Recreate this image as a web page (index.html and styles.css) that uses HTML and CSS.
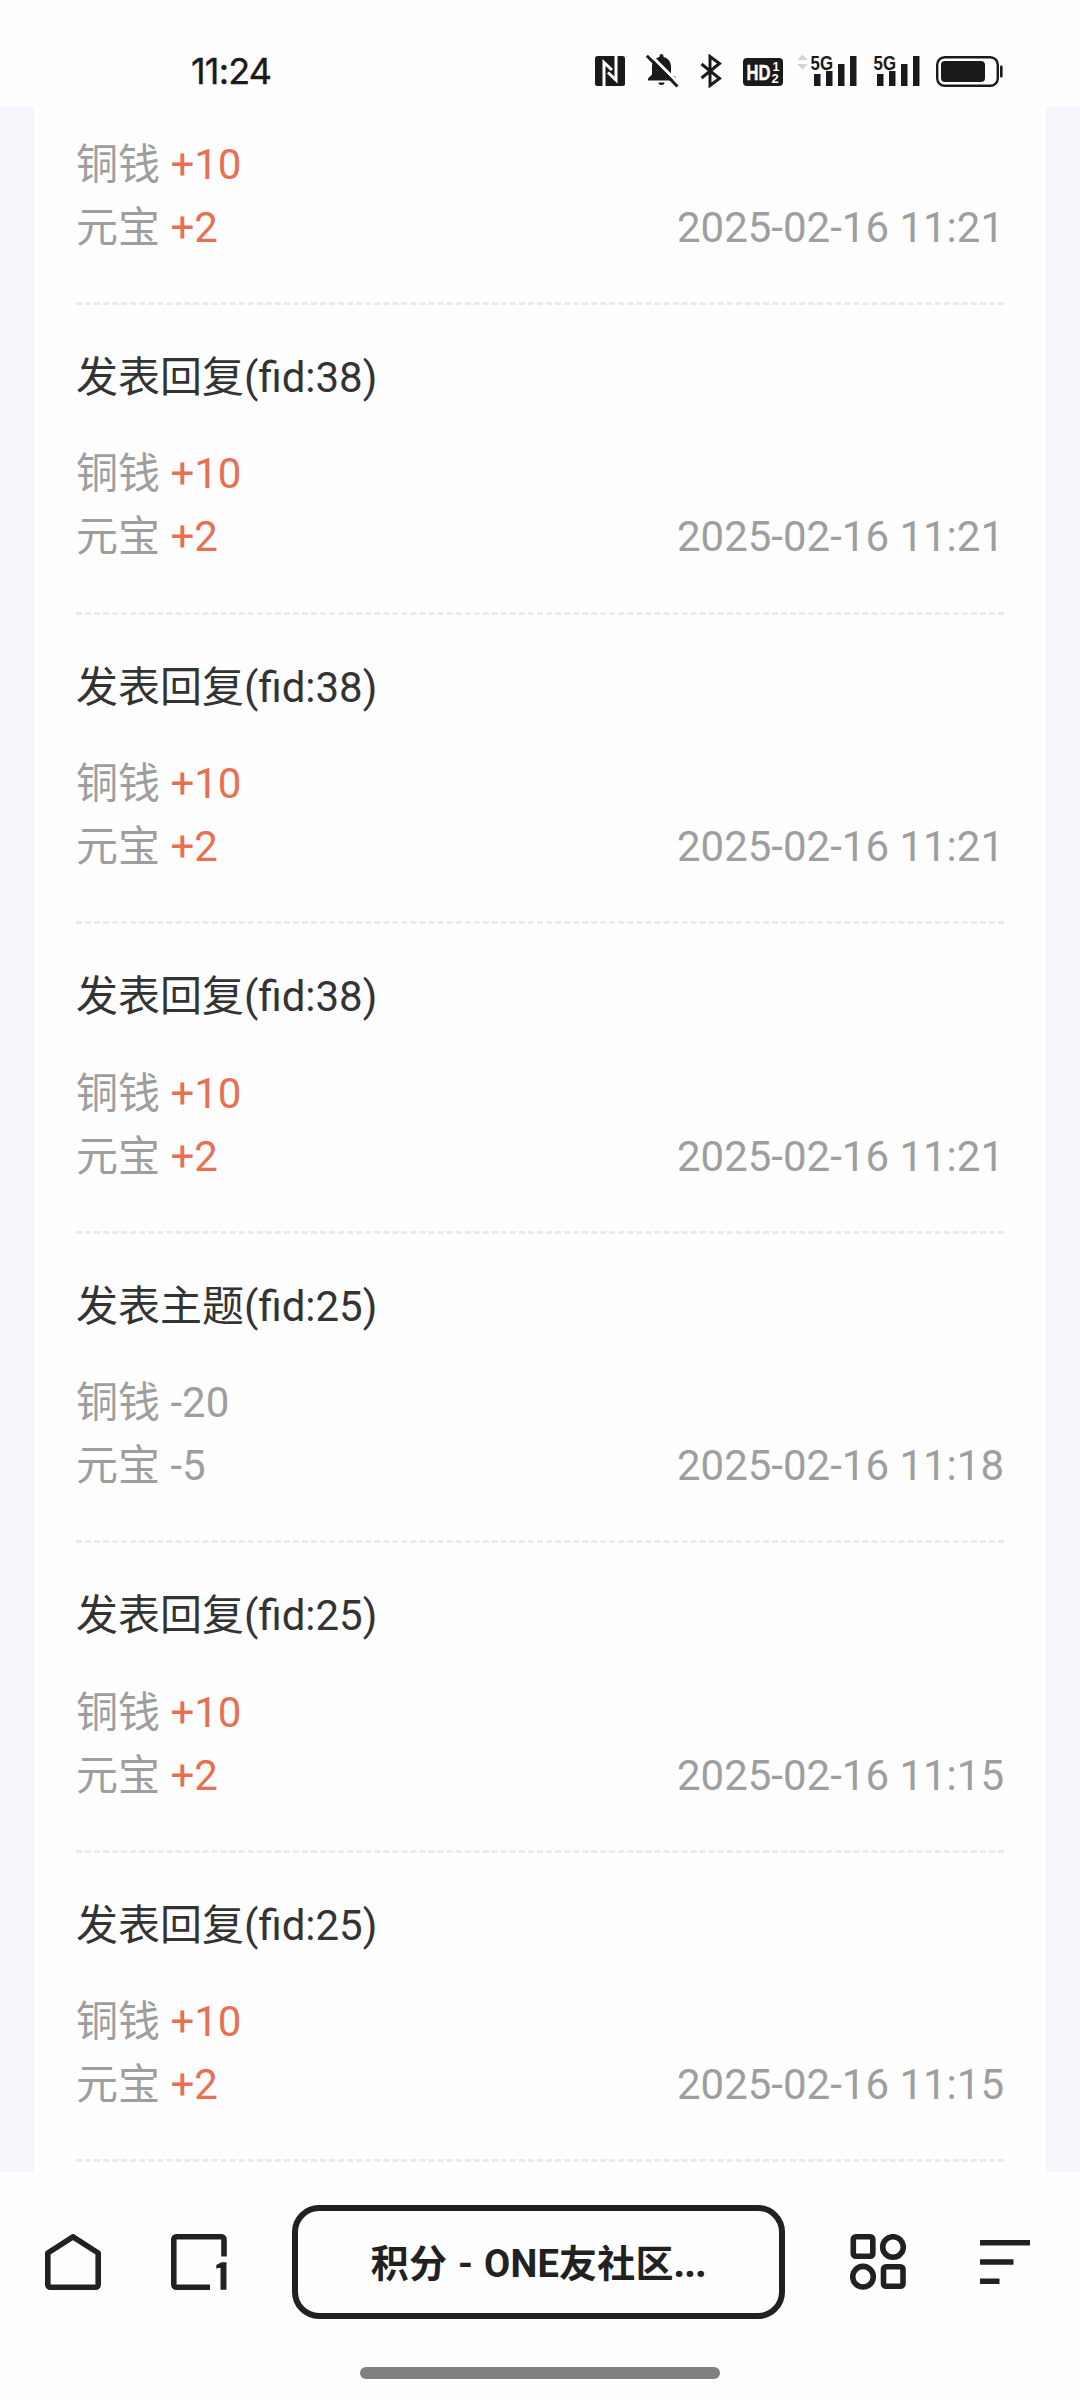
FILE: index.html
```html
<!DOCTYPE html>
<html lang="zh-CN">
<head>
<meta charset="utf-8">
<title>积分 - ONE友社区</title>
<link rel="stylesheet" href="styles.css">
</head>
<body>
<div class="screen">
  <header class="status">
    <span class="clock">11:24</span>
    <div class="status-icons">
      <svg class="nfc" width="30" height="30" viewBox="0 0 30 30">
        <rect width="30" height="30" rx="2.500" fill="#1a1a1a"/>
        <path d="M9 30V6.500L17 14M21 0V24L13 16.500" fill="none" stroke="#fff" stroke-width="3"/>
      </svg>
      <svg class="bell" width="34" height="34" viewBox="0 0 34 34">
        <path d="M2 26.500V24.500L6 20.500V13C6 7.500 9 4 13.500 3V2a2 2 0 0 1 4 0v1C22 4 25 7.500 25 13v7.500l4.500 2.500v3.500ZM12.500 28.500h6a3 2.500 0 0 1-6 0Z" fill="#1a1a1a"/>
        <path d="M3.500 0L34 30.500" stroke="#fff" stroke-width="3"/>
        <path d="M.8 1.800L31.500 32.500" stroke="#1a1a1a" stroke-width="3"/>
      </svg>
      <svg class="bluetooth" width="23" height="34" viewBox="0 0 23 34">
        <path d="M1.500 10L19.500 24.500L10 31.500V2.500L19.500 9.500L1.500 24" fill="none" stroke="#1a1a1a" stroke-width="3"/>
      </svg>
      <svg class="hd" width="40" height="28" viewBox="0 0 40 28">
        <rect width="40" height="28" rx="4" fill="#1a1a1a"/>
        <g class="hd-text">
          <text x="3.500" y="22" font-size="22" textLength="24" lengthAdjust="spacingAndGlyphs" stroke="#fff" stroke-width=".4">HD</text>
          <text x="29.500" y="12.800" font-size="12.500">1</text>
          <text x="28.500" y="24.500" font-size="13">2</text>
        </g>
      </svg>
      <svg class="signal-a" width="60" height="40" viewBox="0 -6 60 40">
        <path d="M0 6L5.500 .5L11 6ZM0 10H11L5.500 15.500Z" fill="#d6d6d6"/>
        <text class="gen" x="13.500" y="15.500" textLength="22.500" lengthAdjust="spacingAndGlyphs">5G</text>
        <path d="M17 20h6.500v12h-6.500zM29 17h6.500v15h-6.500zM41 10h6.500v22h-6.500zM53 2h6.500v30h-6.500z" fill="#1a1a1a"/>
      </svg>
      <svg class="signal-b" width="47" height="40" viewBox="13 -6 47 40">
        <text class="gen" x="13.500" y="15.500" textLength="22.500" lengthAdjust="spacingAndGlyphs">5G</text>
        <path d="M17 20h6.500v12h-6.500zM29 17h6.500v15h-6.500zM41 10h6.500v22h-6.500zM53 2h6.500v30h-6.500z" fill="#1a1a1a"/>
      </svg>
      <svg class="battery" width="67" height="31" viewBox="0 0 67 31">
        <rect x="1.200" y="1.200" width="60.600" height="28.600" rx="7.500" fill="none" stroke="#1a1a1a" stroke-width="2.400"/>
        <rect x="5" y="5" width="44" height="21" rx="4" fill="#1a1a1a"/>
        <rect x="64" y="9.500" width="2.600" height="12" rx="1.200" fill="#1a1a1a"/>
      </svg>
    </div>
  </header>

  <main class="page">
    <ul class="log">
      <li class="entry">
        <div class="detail">
          <div><p>铜钱 <span class="gain">+10</span></p><p>元宝 <span class="gain">+2</span></p></div>
          <time>2025-02-16 11:21</time>
        </div>
      </li>
      <li class="entry">
        <h2>发表回复(fid:38)</h2>
        <div class="detail">
          <div><p>铜钱 <span class="gain">+10</span></p><p>元宝 <span class="gain">+2</span></p></div>
          <time>2025-02-16 11:21</time>
        </div>
      </li>
      <li class="entry">
        <h2>发表回复(fid:38)</h2>
        <div class="detail">
          <div><p>铜钱 <span class="gain">+10</span></p><p>元宝 <span class="gain">+2</span></p></div>
          <time>2025-02-16 11:21</time>
        </div>
      </li>
      <li class="entry">
        <h2>发表回复(fid:38)</h2>
        <div class="detail">
          <div><p>铜钱 <span class="gain">+10</span></p><p>元宝 <span class="gain">+2</span></p></div>
          <time>2025-02-16 11:21</time>
        </div>
      </li>
      <li class="entry">
        <h2>发表主题(fid:25)</h2>
        <div class="detail">
          <div><p>铜钱 -20</p><p>元宝 -5</p></div>
          <time>2025-02-16 11:18</time>
        </div>
      </li>
      <li class="entry">
        <h2>发表回复(fid:25)</h2>
        <div class="detail">
          <div><p>铜钱 <span class="gain">+10</span></p><p>元宝 <span class="gain">+2</span></p></div>
          <time>2025-02-16 11:15</time>
        </div>
      </li>
      <li class="entry">
        <h2>发表回复(fid:25)</h2>
        <div class="detail">
          <div><p>铜钱 <span class="gain">+10</span></p><p>元宝 <span class="gain">+2</span></p></div>
          <time>2025-02-16 11:15</time>
        </div>
      </li>
    </ul>
  </main>

  <footer class="browser">
    <nav class="toolbar">
      <svg class="icon" width="56" height="56" viewBox="0 0 56 56">
        <path d="M2.800 19L28 2.800L53.200 19V50.700a2.500 2.500 0 0 1-2.500 2.500H5.300a2.500 2.500 0 0 1-2.500-2.500Z"/>
      </svg>
      <svg class="icon tabs" width="56" height="56" viewBox="0 0 56 56">
        <path d="M53 22.500V5.300a2.500 2.500 0 0 0-2.500-2.500H5.300a2.500 2.500 0 0 0-2.500 2.500V50.700a2.500 2.500 0 0 0 2.500 2.500H39"/>
        <path class="count" d="M45.300 31L50.500 28.300H55.500V55.700H49.500V33.800L45.300 34.500Z"/>
      </svg>
      <div class="address">积分 - ONE友社区<span class="dots">…</span></div>
      <svg class="icon" width="56" height="56" viewBox="0 0 56 56">
        <rect x="3.300" y="2.800" width="19.500" height="19.500" rx="2.500"/>
        <circle cx="43" cy="13" r="10.300"/>
        <circle cx="13" cy="42.700" r="10.300"/>
        <rect x="33.500" y="32.800" width="19.500" height="19.500" rx="2.500"/>
      </svg>
      <svg class="icon menu" width="50" height="56" viewBox="0 0 50 56">
        <path d="M0 8.800H50M0 28H33.500M0 47.200H19.500"/>
      </svg>
    </nav>
    <div class="home-bar"></div>
  </footer>
</div>
</body>
</html>
```
FILE: styles.css
```css
* { box-sizing: border-box; }
body, h2, p, ul { margin: 0; padding: 0; }
body { background: #fff; font-family: Roboto, "Noto Sans CJK SC", sans-serif; }

.screen {
  width: 1080px;
  height: 2400px;
  display: flex;
  flex-direction: column;
  background: #fefefe;
  overflow: hidden;
}

/* status bar */
.status {
  height: 107px;
  flex: none;
  display: flex;
  justify-content: space-between;
  align-items: flex-start;
  padding: 53px 77px 0 191px;
}
.clock {
  font: 400 36px/36px Inter, sans-serif;
  color: #1a1a1a;
  letter-spacing: -0.8px;
  -webkit-text-stroke: 0.4px #1a1a1a;
}
.status-icons { display: flex; align-items: flex-start; margin-top: 1px; }
.nfc { margin: 2px 21px 0 0; }
.bell { margin-right: 20px; }
.bluetooth { margin-right: 20px; }
.hd { margin: 4px 14px 0 0; }
.signal-a,
.signal-b { margin: -6px 16px 0 0; }
.battery { margin-top: 2px; }
.hd-text { font-family: "Liberation Sans", sans-serif; font-weight: 700; fill: #fff; }
.gen { font: 700 21px "Liberation Sans", sans-serif; fill: #1a1a1a; }

/* points log */
.page {
  flex: none;
  height: 2065px;
  padding: 0 34px;
  background: #f5f6fb;
  overflow: hidden;
}
.log {
  list-style: none;
  height: 100%;
  padding: 0 42px;
  background: #fefefe;
}
.entry {
  height: 309.5px;
  padding-top: 41px;
  border-bottom: 3px dashed #ebebeb;
  font-size: 42px;
  line-height: 63px;
}
.entry:first-child { height: 198px; padding-top: 26px; }
.entry h2 {
  margin-bottom: 33.5px;
  font-size: 42px;
  font-weight: 400;
  color: #333;
}
.entry:nth-child(2) h2 { margin-bottom: 33px; }
.detail {
  display: flex;
  justify-content: space-between;
  align-items: flex-end;
  color: #9e9e9e;
}
.gain { color: #e96f53; }

/* browser controls */
.browser { flex: 1; padding-top: 33px; }
.toolbar {
  height: 114px;
  display: flex;
  align-items: center;
  gap: 65px;
  padding-left: 45px;
}
.icon { flex: none; fill: none; stroke: #212121; stroke-width: 5.6; stroke-linejoin: round; }
.tabs { margin-left: 5px; }
.count { fill: #212121; stroke: none; }
.menu { margin-left: 9px; }
.address {
  flex: none;
  width: 493px;
  height: 114px;
  border: 6px solid #212121;
  border-radius: 27px;
  color: #212121;
  font: 700 38px/102px Roboto, "Noto Sans CJK SC", sans-serif;
  letter-spacing: 0.2px;
  word-spacing: 1.2px;
  text-align: center;
  white-space: nowrap;
}
.dots { font-family: "Noto Sans", sans-serif; letter-spacing: 0; }
.home-bar {
  width: 360px;
  height: 12px;
  margin: 48px auto 0;
  border-radius: 6px;
  background: #808080;
}
```
